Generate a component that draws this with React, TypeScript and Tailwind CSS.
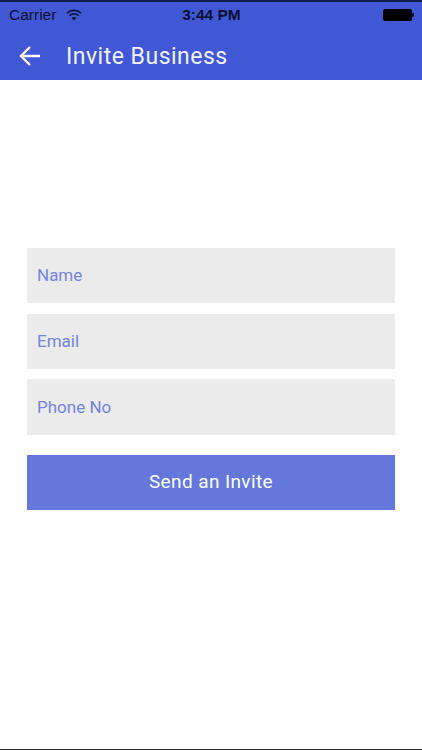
import React from "react";

const WifiIcon: React.FC = () => (
  <svg viewBox="0 0 16 12" className="h-[12px] w-[16px]" aria-hidden="true">
    <path d="M1 4.2a10 10 0 0 1 14 0" fill="none" stroke="#0b1030" strokeWidth="1.5" />
    <path d="M3.4 6.7a6.6 6.6 0 0 1 9.2 0" fill="none" stroke="#0b1030" strokeWidth="1.5" />
    <path d="M5.7 9a3.3 3.3 0 0 1 4.6 0L8 11.4Z" fill="#0b1030" />
  </svg>
);

const Field: React.FC<{ label: string; className?: string }> = ({ label, className }) => (
  <div className={`flex items-center bg-[#ebebeb] pl-[10px] text-[17px] text-[#7284e0] ${className}`}>
    {label}
  </div>
);

export default function App() {
  return (
    <div className="flex h-[750px] w-[422px] flex-col overflow-hidden bg-white font-['Roboto',sans-serif]">
      <header className="h-[80px] shrink-0 border-t-[2px] border-[#141a4a] bg-[#4057d6]">
        <div className="flex h-[26px] items-center justify-between pl-[9px] pr-[8px] font-['Liberation_Sans',sans-serif] text-[15.5px] text-[#0b1030]">
          <div className="flex w-[140px] items-center gap-[10px]">
            <span>Carrier</span>
            <WifiIcon />
          </div>
          <span className="font-semibold">3:44 PM</span>
          <div className="flex w-[140px] justify-end">
            <div className="flex items-center">
              <div className="h-[12px] w-[29px] rounded-[2px] bg-black" />
              <div className="h-[4px] w-[2px] rounded-r-[1px] bg-[#0b1030]" />
            </div>
          </div>
        </div>
        <div className="mt-[2px] flex h-[50px] items-center pl-[18px] text-white">
          <svg viewBox="0 0 24 24" className="mt-[2px] h-[24px] w-[24px]" aria-hidden="true">
            <path
              d="M22 12H3M12 3l-9 9 9 9"
              fill="none"
              stroke="currentColor"
              strokeWidth="2.4"
            />
          </svg>
          <h1 className="ml-[24px] mt-[4px] text-[23px] tracking-[0.5px] text-[#f0f2ff]">Invite Business</h1>
        </div>
      </header>

      <main className="flex flex-1 flex-col px-[27px] pt-[168px]">
        <div className="flex flex-col">
          <Field label="Name" className="h-[55px]" />
          <Field label="Email" className="mt-[11px] h-[55px]" />
          <Field label="Phone No" className="mt-[10px] h-[56px] pt-[1px]" />
        </div>
        <button className="mt-[20px] h-[55px] bg-[#6478dc] text-[19px] tracking-[0.4px] text-white">
          Send an Invite
        </button>
      </main>

      <div className="h-[1px] shrink-0 bg-[#2b2b2b]" />
    </div>
  );
}
